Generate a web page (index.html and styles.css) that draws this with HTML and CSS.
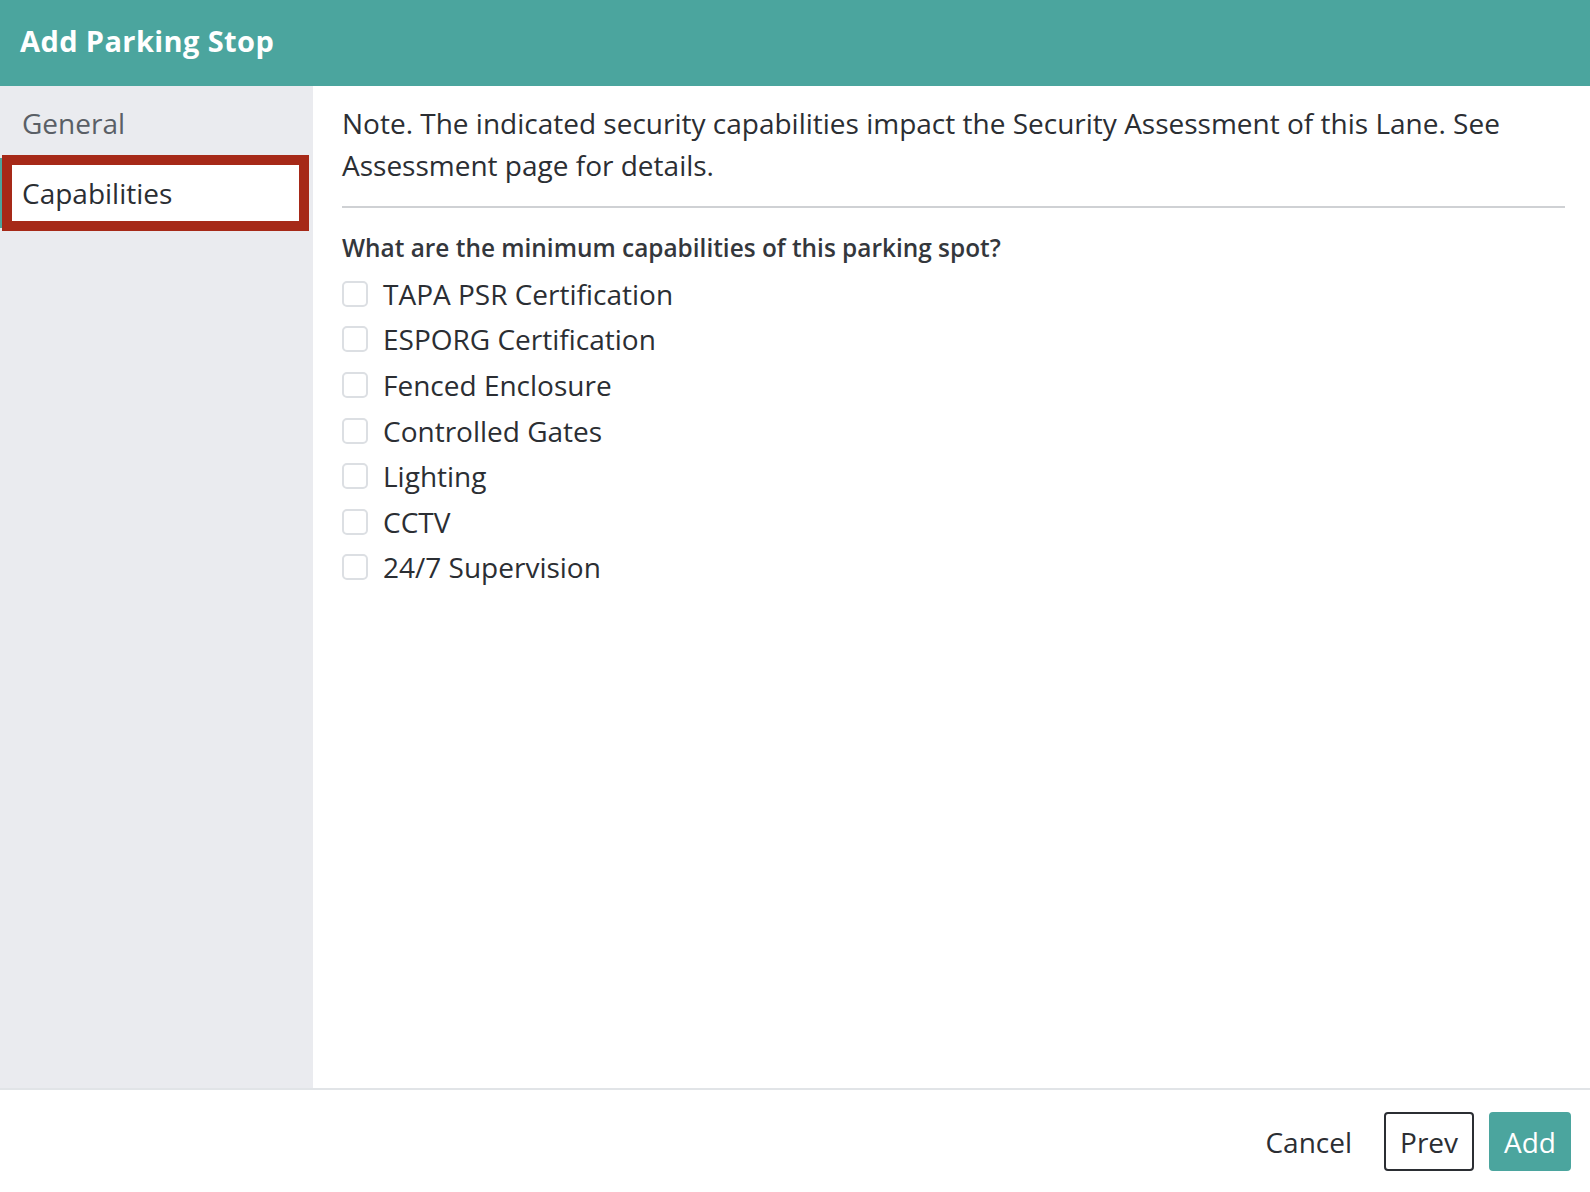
FILE: index.html
```html
<!DOCTYPE html>
<html lang="en">
<head>
    <meta charset="UTF-8">
    <title>Add Parking Stop</title>
    <link rel="stylesheet" href="styles.css">
</head>
<body>
    <div class="modal">
        <header class="modal-header">Add Parking Stop</header>

        <div class="modal-body">
            <!-- left tabs -->
            <nav class="steps">
                <div class="step">General</div>
                <div class="step active">Capabilities</div>
            </nav>

            <section class="panel">
                <p class="note">Note. The indicated security capabilities impact the Security Assessment of this Lane. See Assessment page for details.</p>
                <hr class="divider">
                <div class="question">What are the minimum capabilities of this parking spot?</div>
                <ul class="options">
                    <li><span class="box"></span>TAPA PSR Certification</li>
                    <li><span class="box"></span>ESPORG Certification</li>
                    <li><span class="box"></span>Fenced Enclosure</li>
                    <li><span class="box"></span>Controlled Gates</li>
                    <li><span class="box"></span>Lighting</li>
                    <li><span class="box"></span>CCTV</li>
                    <li><span class="box"></span>24/7 Supervision</li>
                </ul>
            </section>
        </div>

        <footer class="modal-footer">
            <button class="btn btn-link">Cancel</button>
            <button class="btn btn-outline">Prev</button>
            <button class="btn btn-primary">Add</button>
        </footer>
    </div>
</body>
</html>
```

FILE: styles.css
```css
body {
    margin: 0;
    font-family: 'Open Sans', 'Noto Sans', sans-serif;
    color: #2b2e33;
    background: #fff;
}

.modal {
    height: 1192px;
    display: flex;
    flex-direction: column;
}

.modal-header {
    height: 86px;
    flex: none;
    background-color: #4ba59e;
    color: #fff;
    font-size: 29px;
    font-weight: 700;
    letter-spacing: 0.4px;
    padding: 0 20px 5px;
    display: flex;
    align-items: center;
    box-sizing: border-box;
}

.modal-body {
    flex: 1;
    display: flex;
    min-height: 0;
}

/* 左側のステップ一覧 */
.steps {
    width: 313px;
    flex: none;
    background-color: #eaebef;
}

.step {
    height: 69px;
    padding: 5px 22px 0;
    display: flex;
    align-items: center;
    font-size: 28px;
    color: #5a5f66;
    box-sizing: border-box;
}

.step.active {
    position: relative;
    height: 76px;
    margin: 0 4px 0 2px;
    padding: 0 10px;
    background-color: #fff;
    border: 10px solid #a62918;
    color: #2b2e33;
}

.step.active::before {
    content: "";
    position: absolute;
    left: -12px;
    top: -7px;
    bottom: -7px;
    width: 2px;
    background-color: #4ba59e;
}

.panel {
    flex: 1;
    padding: 16px 25px 0 29px;
}

.note {
    margin: 0;
    font-size: 28px;
    line-height: 42px;
}

.divider {
    border: none;
    border-top: 2px solid #cfd1d4;
    margin: 20px 0 24px;
}

.question {
    font-size: 24.4px;
    font-weight: 600;
    line-height: 32px;
    color: #34373c;
}

.options {
    list-style: none;
    margin: 7px 0 0;
    padding: 0;
}

.options li {
    height: 45.6px;
    display: flex;
    align-items: center;
    font-size: 28px;
}

.box {
    width: 26px;
    height: 26px;
    box-sizing: border-box;
    border: 2px solid #dcdfe3;
    border-radius: 5px;
    margin-right: 15px;
    background: #fff;
}

.modal-footer {
    flex: none;
    height: 104px;
    box-sizing: border-box;
    border-top: 2px solid #e1e4e7;
    padding: 22px 19px 0 0;
    display: flex;
    justify-content: flex-end;
    align-items: flex-start;
    gap: 15px;
}

.btn {
    height: 59px;
    font-family: inherit;
    font-size: 28px;
    border-radius: 4px;
    border: 2px solid transparent;
    background: none;
    cursor: pointer;
    padding: 0 15px;
    color: #2b2e33;
}

.btn-outline {
    border-color: #2b2e33;
    padding: 0 14px;
}

.btn-primary {
    background-color: #4ba59e;
    border-color: #4ba59e;
    color: #fff;
    padding: 0 13px;
}
```
